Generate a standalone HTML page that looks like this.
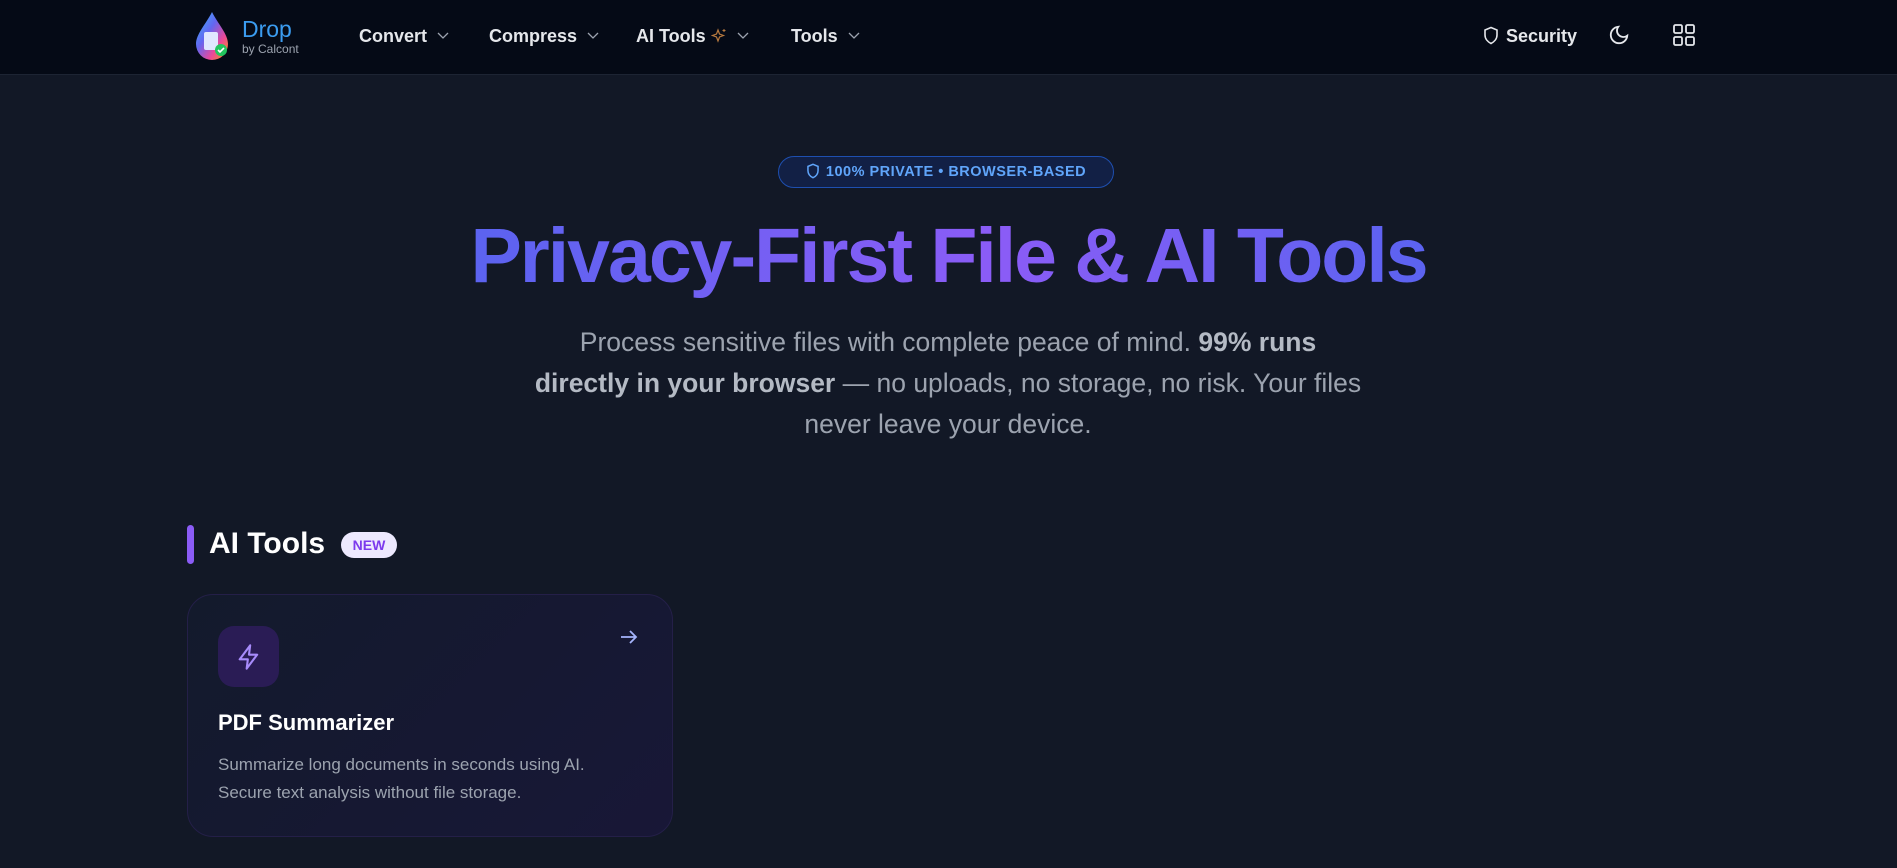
<!DOCTYPE html>
<html><head><meta charset="utf-8"><style>
*{margin:0;padding:0;box-sizing:border-box}
body{width:1897px;height:868px;overflow:hidden;background:#121826;font-family:"Liberation Sans",sans-serif;position:relative}
.nav{position:absolute;left:0;top:0;width:1897px;height:75px;background:#050a16;border-bottom:1px solid #1d2433}
.abs{position:absolute}
.ni{position:absolute;top:26px;color:#e5e7eb;font-weight:bold;font-size:18px}
.chev{display:inline-block;margin-left:10px;vertical-align:2px}
</style></head><body>
<div class="nav">
 <svg class="abs" style="left:192px;top:10px" width="40" height="52" viewBox="0 0 40 52">
  <defs><linearGradient id="dg" x1="0" y1="0" x2="1" y2="1"><stop offset="0" stop-color="#38bdf8"/><stop offset=".4" stop-color="#6366f1"/><stop offset=".7" stop-color="#ec4899"/><stop offset="1" stop-color="#f59e0b"/></linearGradient></defs>
  <path d="M20 2 C14 14 4 24 4 34 A16 16 0 0 0 36 34 C36 24 26 14 20 2Z" fill="url(#dg)"/>
  <rect x="12" y="22" width="14" height="18" rx="2" fill="#e0e7ff"/>
  <circle cx="29" cy="40" r="6" fill="#22c55e"/><path d="M26 40l2 2 4-4" stroke="#fff" stroke-width="1.6" fill="none"/>
 </svg>
 <div class="abs" style="left:242px;top:17px;color:#3b9cf0;font-size:23px;line-height:24px">Drop</div>
 <div class="abs" style="left:242px;top:42px;color:#9ca3af;font-size:12px">by Calcont</div>
 <div class="ni" style="left:359px">Convert<svg class="chev" width="12" height="8"><path d="M1 1l5 5 5-5" stroke="#9ca3af" fill="none" stroke-width="1.3"/></svg></div>
 <div class="ni" style="left:489px">Compress<svg class="chev" width="12" height="8"><path d="M1 1l5 5 5-5" stroke="#9ca3af" fill="none" stroke-width="1.3"/></svg></div>
 <div class="ni" style="left:636px">AI Tools <svg width="16" height="16" viewBox="0 0 16 16" style="vertical-align:-2px"><path d="M7 2l1.5 4 4 1.5-4 1.5L7 13 5.5 9l-4-1.5 4-1.5z" stroke="#b7793f" fill="none" stroke-width="1.2"/><path d="M13 1v3M11.5 2.5h3" stroke="#b7793f" stroke-width="1"/></svg><svg class="chev" width="12" height="8"><path d="M1 1l5 5 5-5" stroke="#9ca3af" fill="none" stroke-width="1.3"/></svg></div>
 <div class="ni" style="left:791px">Tools<svg class="chev" width="12" height="8"><path d="M1 1l5 5 5-5" stroke="#9ca3af" fill="none" stroke-width="1.3"/></svg></div>
 <svg class="abs" style="left:1483px;top:26px" width="16" height="19" viewBox="0 0 16 19"><path d="M8 1.5L14 4v5c0 4-3 7-6 8.5C5 16 2 13 2 9V4z" stroke="#e5e7eb" fill="none" stroke-width="1.6"/></svg>
 <div class="ni" style="left:1506px">Security</div>
 <svg class="abs" style="left:1608px;top:24px" width="22" height="22" viewBox="0 0 24 24"><path d="M21 12.8A9 9 0 1 1 11.2 3a7 7 0 0 0 9.8 9.8z" stroke="#e5e7eb" fill="none" stroke-width="2"/></svg>
 <svg class="abs" style="left:1673px;top:24px" width="22" height="22" viewBox="0 0 22 22" fill="none" stroke="#e5e7eb" stroke-width="1.8"><rect x="1" y="1" width="8" height="8" rx="1.5"/><rect x="13" y="1" width="8" height="8" rx="1.5"/><rect x="1" y="13" width="8" height="8" rx="1.5"/><rect x="13" y="13" width="8" height="8" rx="1.5"/></svg>
</div>

<div class="abs" style="left:778px;top:156px;width:336px;height:32px;border:1px solid #1e4fb0;border-radius:16px;background:#122045;color:#60a5fa;font-weight:bold;font-size:14.5px;line-height:30px;text-align:center;letter-spacing:.5px">
 <svg width="14" height="16" viewBox="0 0 16 19" style="vertical-align:-3px;margin-right:6px"><path d="M8 1.5L14 4v5c0 4-3 7-6 8.5C5 16 2 13 2 9V4z" stroke="#60a5fa" fill="none" stroke-width="1.8"/></svg>100% PRIVATE • BROWSER-BASED</div>

<div class="abs" style="left:0;top:208px;width:1897px;text-align:center;font-size:77px;font-weight:bold;letter-spacing:-2px;line-height:96px"><span style="background:linear-gradient(90deg,#5b63f0,#8b5cf6 55%,#5b63f0);-webkit-background-clip:text;background-clip:text;color:transparent">Privacy-First File &amp; AI Tools</span></div>

<div class="abs" style="left:532px;top:322px;width:832px;text-align:center;color:#9ca3af;font-size:26.5px;line-height:41px">Process sensitive files with complete peace of mind. <b style="color:#b4bac4">99% runs directly in your browser</b> — no uploads, no storage, no risk. Your files never leave your device.</div>

<div class="abs" style="left:187px;top:525px;width:7px;height:39px;border-radius:4px;background:#8b5cf6"></div>
<div class="abs" style="left:209px;top:526px;color:#fff;font-weight:bold;font-size:30px;line-height:36px">AI Tools</div>
<div class="abs" style="left:341px;top:532px;width:56px;height:26px;border-radius:13px;background:#ede9fe;color:#7c3aed;font-weight:bold;font-size:14px;line-height:26px;text-align:center">NEW</div>

<div class="abs" style="left:187px;top:594px;width:486px;height:243px;border:1px solid #241f48;border-radius:26px;background:linear-gradient(135deg,#131a2c,#181737)">
 <div class="abs" style="left:30px;top:31px;width:61px;height:61px;border-radius:16px;background:#2a1c55"></div>
 <svg class="abs" style="left:47px;top:47px" width="28" height="30" viewBox="0 0 24 24"><path d="M13 2L4 14h7l-1 8 9-12h-7z" stroke="#a78bfa" fill="none" stroke-width="1.8" stroke-linejoin="round"/></svg>
 <svg class="abs" style="left:431px;top:33px" width="20" height="18" viewBox="0 0 20 18"><path d="M2 9h15M11 3l6 6-6 6" stroke="#a5b4fc" fill="none" stroke-width="1.8"/></svg>
 <div class="abs" style="left:30px;top:115px;color:#fff;font-weight:bold;font-size:22px">PDF Summarizer</div>
 <div class="abs" style="left:30px;top:156px;color:#9ca3af;font-size:17px;line-height:28px;width:420px">Summarize long documents in seconds using AI. Secure text analysis without file storage.</div>
</div>
</body></html>
